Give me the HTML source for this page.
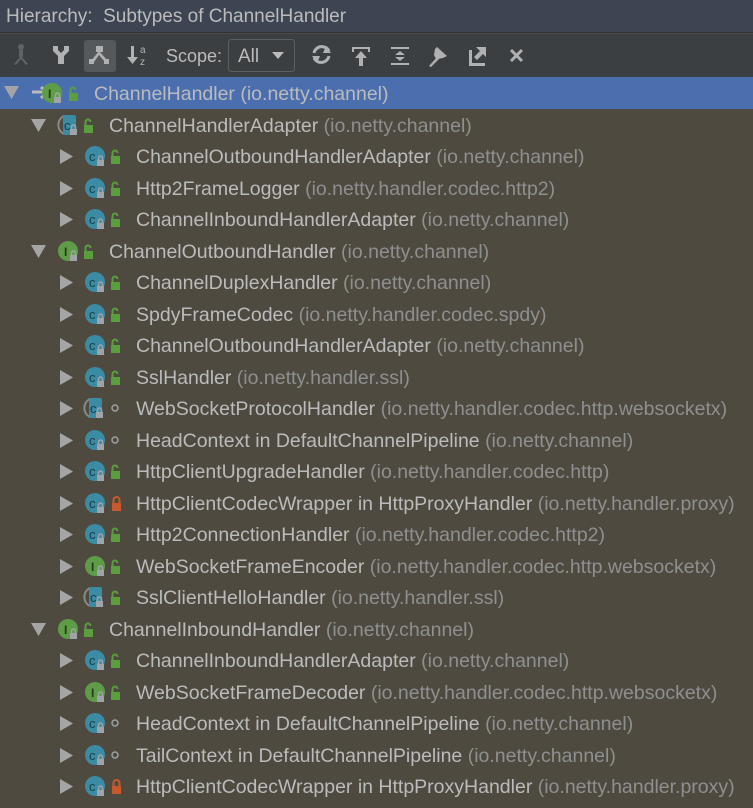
<!DOCTYPE html>
<html><head><meta charset="utf-8"><style>
body{margin:0;width:753px;height:808px;overflow:hidden;background:#4e4a40;font-family:"Liberation Sans",sans-serif;}
.title{position:absolute;left:0;top:0;width:753px;height:33px;background:#3d4553;color:#bbbbbb;font-size:19px;line-height:33px;padding-left:6px;box-sizing:border-box;border-bottom:1px solid #2f3338}
.tb{position:absolute;left:0;top:34px;width:753px;height:43px;background:#3c3f41}
.tb svg{position:absolute;top:0}
.r{position:absolute;left:0;width:753px;height:32px;color:#bbbbbb;font-size:19.5px;line-height:32px;white-space:nowrap}
.r.sel{background:#4b6eaf}
.r .t{position:absolute;top:1px}
.r .t i{font-style:normal;color:#8f8f8f}
.sel .t i{color:#bbbbbb}
.ic{position:absolute;top:6px}
</style></head><body>
<div class="title">Hierarchy:&nbsp; Subtypes of ChannelHandler</div>
<div class="tb">
<svg width="753" height="43">
<g fill="#606366"><circle cx="21" cy="13" r="3"/><rect x="19" y="16" width="4" height="7"/><path d="M21 22 L14 30 L16 31 L21 25 L26 31 L28 30Z"/></g>
<g fill="#afb1b3"><path d="M53 12h5v4l3 3 3-3v-4h5v5l-5 5v8h-6v-8l-5-5z"/></g>
<rect x="84" y="6" width="32" height="32" rx="3" fill="#55595c"/>
<g fill="#afb1b3"><rect x="96" y="12" width="7" height="6"/><path d="M99 17 L91 27 L94 28 L99 21 L105 28 L108 27Z"/><rect x="89" y="25" width="5" height="5"/><rect x="104" y="25" width="5" height="5"/></g>
<g fill="#afb1b3"><rect x="131" y="12" width="3" height="14"/><path d="M127 23h11l-5.5 7z"/></g>
<text x="140" y="19" fill="#afb1b3" font-size="10" font-family="Liberation Sans">a</text>
<text x="140" y="31" fill="#afb1b3" font-size="10" font-family="Liberation Sans">z</text>
<text x="166" y="28" fill="#bbbbbb" font-size="18" font-family="Liberation Sans">Scope:</text>
<rect x="228.5" y="5.5" width="66" height="32" rx="3" fill="#3c3f41" stroke="#5e6060"/>
<text x="238" y="28" fill="#bbbbbb" font-size="19" font-family="Liberation Sans">All</text>
<path d="M272 18h12l-6 7z" fill="#bbbbbb"/>
<g fill="none" stroke="#afb1b3" stroke-width="3"><path d="M329 17a8 8 0 0 0-15 2"/><path d="M314 24a8 8 0 0 0 15-2"/></g>
<path d="M326 12l5 7h-8z M317 29l-5-7h8z" fill="#afb1b3"/>
<g fill="#afb1b3"><path d="M352 13h18v5h-2v-3h-14v3h-2z"/><path d="M361 17l6 7h-4v8h-4v-8h-4z"/></g>
<g fill="#afb1b3"><rect x="391" y="13" width="18" height="2"/><rect x="391" y="29" width="18" height="2"/><path d="M400 17l5 4h-10z M400 27l5-4h-10z"/></g>
<g fill="#afb1b3"><path d="M437 13l10 9-4 2-6 1-1 0-2-4 1-6z"/><path d="M438 22l-9 10 2 1 9-9z"/></g>
<g fill="#afb1b3"><path d="M469 16h3v13h13v3h-16z"/><path d="M476 13h10v10l-3-3-6 6-3-3 6-6z"/></g>
<g stroke="#afb1b3" stroke-width="3"><path d="M511 16l11 11M522 16l-11 11"/></g>
</svg>
</div>

<svg width="0" height="0" style="position:absolute">
<defs>
<g id="tri"><path d="M0 0l13 7.5-13 7.5z" fill="#a5a5a5"/></g>
<g id="triD"><path d="M0 0h15l-7.5 13z" fill="#a5a5a5"/></g>
<g id="C"><circle cx="10" cy="10" r="10" fill="#3b8ba5"/><text x="4" y="15" font-size="13" fill="#1a3c48" font-family="Liberation Sans">c</text><rect x="12" y="14" width="7" height="6" fill="#a0a4a8"/><path d="M13.5 14v-2a2 2 0 0 1 4 0v2" fill="none" stroke="#a0a4a8" stroke-width="1.5"/></g>
<g id="I"><circle cx="10" cy="10" r="10" fill="#5e9c47"/><text x="6" y="15" font-size="12" fill="#233b1a" font-family="Liberation Sans" font-weight="bold">I</text><rect x="12" y="14" width="7" height="6" fill="#a0a4a8"/><path d="M13.5 14v-2a2 2 0 0 1 4 0v2" fill="none" stroke="#a0a4a8" stroke-width="1.5"/></g>
<g id="A"><path d="M6 1a10 10 0 0 0 0 18" fill="none" stroke="#8a8a8a" stroke-width="2"/><rect x="5" y="0" width="13" height="20" rx="2" fill="#3b8ba5"/><text x="6" y="15" font-size="13" fill="#1a3c48" font-family="Liberation Sans">c</text><rect x="12" y="14" width="7" height="6" fill="#a0a4a8"/><path d="M13.5 14v-2a2 2 0 0 1 4 0v2" fill="none" stroke="#a0a4a8" stroke-width="1.5"/></g>
<g id="U"><rect x="0" y="7" width="9" height="8" fill="#5a9e3e"/><path d="M1.5 7v-3a2.5 2.5 0 0 1 5 0" fill="none" stroke="#5a9e3e" stroke-width="2"/></g>
<g id="L"><rect x="0" y="7" width="9" height="8" fill="#c8592d"/><path d="M1.5 7v-3a3 3 0 0 1 6 0v3" fill="none" stroke="#c8592d" stroke-width="2"/></g>
<g id="D"><circle cx="4" cy="10" r="3" fill="none" stroke="#a0a0a0" stroke-width="1.5"/></g>
</defs></svg>

<div class="r sel" style="top:77px"><svg class="ic" style="top:0;left:0" width="120" height="32"><use href="#triD" x="4" y="9"/><path d="M32 15h14M41 10l6 5.5-6 5.5" stroke="#bbbbbb" stroke-width="3" fill="none"/><g transform="translate(42,6)"><use href="#I"/></g><g transform="translate(69,9)"><use href="#U"/></g></svg><span class="t" style="left:94px">ChannelHandler <i>(io.netty.channel)</i></span></div>

<div class="r" style="top:109px"><svg class="ic" style="top:0;left:0" width="110" height="32"><use href="#triD" x="31" y="10"/><g transform="translate(58,6)"><use href="#A"/></g><g transform="translate(84,9)"><use href="#U"/></g></svg><span class="t" style="left:109px">ChannelHandlerAdapter <i>(io.netty.channel)</i></span></div>
<div class="r" style="top:140px"><svg class="ic" style="top:0;left:0" width="135" height="32"><use href="#tri" x="60" y="9"/><g transform="translate(85,6)"><use href="#C"/></g><g transform="translate(111,9)"><use href="#U"/></g></svg><span class="t" style="left:136px">ChannelOutboundHandlerAdapter <i>(io.netty.channel)</i></span></div>
<div class="r" style="top:172px"><svg class="ic" style="top:0;left:0" width="135" height="32"><use href="#tri" x="60" y="9"/><g transform="translate(85,6)"><use href="#C"/></g><g transform="translate(111,9)"><use href="#U"/></g></svg><span class="t" style="left:136px">Http2FrameLogger <i>(io.netty.handler.codec.http2)</i></span></div>
<div class="r" style="top:203px"><svg class="ic" style="top:0;left:0" width="135" height="32"><use href="#tri" x="60" y="9"/><g transform="translate(85,6)"><use href="#C"/></g><g transform="translate(111,9)"><use href="#U"/></g></svg><span class="t" style="left:136px">ChannelInboundHandlerAdapter <i>(io.netty.channel)</i></span></div>

<div class="r" style="top:235px"><svg class="ic" style="top:0;left:0" width="110" height="32"><use href="#triD" x="31" y="10"/><g transform="translate(58,6)"><use href="#I"/></g><g transform="translate(84,9)"><use href="#U"/></g></svg><span class="t" style="left:109px">ChannelOutboundHandler <i>(io.netty.channel)</i></span></div>
<div class="r" style="top:266px"><svg class="ic" style="top:0;left:0" width="135" height="32"><use href="#tri" x="60" y="9"/><g transform="translate(85,6)"><use href="#C"/></g><g transform="translate(111,9)"><use href="#U"/></g></svg><span class="t" style="left:136px">ChannelDuplexHandler <i>(io.netty.channel)</i></span></div>
<div class="r" style="top:298px"><svg class="ic" style="top:0;left:0" width="135" height="32"><use href="#tri" x="60" y="9"/><g transform="translate(85,6)"><use href="#C"/></g><g transform="translate(111,9)"><use href="#U"/></g></svg><span class="t" style="left:136px">SpdyFrameCodec <i>(io.netty.handler.codec.spdy)</i></span></div>
<div class="r" style="top:329px"><svg class="ic" style="top:0;left:0" width="135" height="32"><use href="#tri" x="60" y="9"/><g transform="translate(85,6)"><use href="#C"/></g><g transform="translate(111,9)"><use href="#U"/></g></svg><span class="t" style="left:136px">ChannelOutboundHandlerAdapter <i>(io.netty.channel)</i></span></div>
<div class="r" style="top:361px"><svg class="ic" style="top:0;left:0" width="135" height="32"><use href="#tri" x="60" y="9"/><g transform="translate(85,6)"><use href="#C"/></g><g transform="translate(111,9)"><use href="#U"/></g></svg><span class="t" style="left:136px">SslHandler <i>(io.netty.handler.ssl)</i></span></div>
<div class="r" style="top:392px"><svg class="ic" style="top:0;left:0" width="135" height="32"><use href="#tri" x="60" y="9"/><g transform="translate(84,6)"><use href="#A"/></g><g transform="translate(111,6)"><use href="#D"/></g></svg><span class="t" style="left:136px">WebSocketProtocolHandler <i>(io.netty.handler.codec.http.websocketx)</i></span></div>
<div class="r" style="top:424px"><svg class="ic" style="top:0;left:0" width="135" height="32"><use href="#tri" x="60" y="9"/><g transform="translate(85,6)"><use href="#C"/></g><g transform="translate(111,6)"><use href="#D"/></g></svg><span class="t" style="left:136px">HeadContext in DefaultChannelPipeline <i>(io.netty.channel)</i></span></div>
<div class="r" style="top:455px"><svg class="ic" style="top:0;left:0" width="135" height="32"><use href="#tri" x="60" y="9"/><g transform="translate(85,6)"><use href="#C"/></g><g transform="translate(111,9)"><use href="#U"/></g></svg><span class="t" style="left:136px">HttpClientUpgradeHandler <i>(io.netty.handler.codec.http)</i></span></div>
<div class="r" style="top:487px"><svg class="ic" style="top:0;left:0" width="135" height="32"><use href="#tri" x="60" y="9"/><g transform="translate(85,6)"><use href="#C"/></g><g transform="translate(112,9)"><use href="#L"/></g></svg><span class="t" style="left:136px">HttpClientCodecWrapper in HttpProxyHandler <i>(io.netty.handler.proxy)</i></span></div>
<div class="r" style="top:518px"><svg class="ic" style="top:0;left:0" width="135" height="32"><use href="#tri" x="60" y="9"/><g transform="translate(85,6)"><use href="#C"/></g><g transform="translate(111,9)"><use href="#U"/></g></svg><span class="t" style="left:136px">Http2ConnectionHandler <i>(io.netty.handler.codec.http2)</i></span></div>
<div class="r" style="top:550px"><svg class="ic" style="top:0;left:0" width="135" height="32"><use href="#tri" x="60" y="9"/><g transform="translate(85,6)"><use href="#I"/></g><g transform="translate(111,9)"><use href="#U"/></g></svg><span class="t" style="left:136px">WebSocketFrameEncoder <i>(io.netty.handler.codec.http.websocketx)</i></span></div>
<div class="r" style="top:581px"><svg class="ic" style="top:0;left:0" width="135" height="32"><use href="#tri" x="60" y="9"/><g transform="translate(84,6)"><use href="#A"/></g><g transform="translate(111,9)"><use href="#U"/></g></svg><span class="t" style="left:136px">SslClientHelloHandler <i>(io.netty.handler.ssl)</i></span></div>

<div class="r" style="top:613px"><svg class="ic" style="top:0;left:0" width="110" height="32"><use href="#triD" x="31" y="10"/><g transform="translate(58,6)"><use href="#I"/></g><g transform="translate(84,9)"><use href="#U"/></g></svg><span class="t" style="left:109px">ChannelInboundHandler <i>(io.netty.channel)</i></span></div>
<div class="r" style="top:644px"><svg class="ic" style="top:0;left:0" width="135" height="32"><use href="#tri" x="60" y="9"/><g transform="translate(85,6)"><use href="#C"/></g><g transform="translate(111,9)"><use href="#U"/></g></svg><span class="t" style="left:136px">ChannelInboundHandlerAdapter <i>(io.netty.channel)</i></span></div>
<div class="r" style="top:676px"><svg class="ic" style="top:0;left:0" width="135" height="32"><use href="#tri" x="60" y="9"/><g transform="translate(85,6)"><use href="#I"/></g><g transform="translate(111,9)"><use href="#U"/></g></svg><span class="t" style="left:136px">WebSocketFrameDecoder <i>(io.netty.handler.codec.http.websocketx)</i></span></div>
<div class="r" style="top:707px"><svg class="ic" style="top:0;left:0" width="135" height="32"><use href="#tri" x="60" y="9"/><g transform="translate(85,6)"><use href="#C"/></g><g transform="translate(111,6)"><use href="#D"/></g></svg><span class="t" style="left:136px">HeadContext in DefaultChannelPipeline <i>(io.netty.channel)</i></span></div>
<div class="r" style="top:739px"><svg class="ic" style="top:0;left:0" width="135" height="32"><use href="#tri" x="60" y="9"/><g transform="translate(85,6)"><use href="#C"/></g><g transform="translate(111,6)"><use href="#D"/></g></svg><span class="t" style="left:136px">TailContext in DefaultChannelPipeline <i>(io.netty.channel)</i></span></div>
<div class="r" style="top:770px"><svg class="ic" style="top:0;left:0" width="135" height="32"><use href="#tri" x="60" y="9"/><g transform="translate(85,6)"><use href="#C"/></g><g transform="translate(112,9)"><use href="#L"/></g></svg><span class="t" style="left:136px">HttpClientCodecWrapper in HttpProxyHandler <i>(io.netty.handler.proxy)</i></span></div>
</body></html>
